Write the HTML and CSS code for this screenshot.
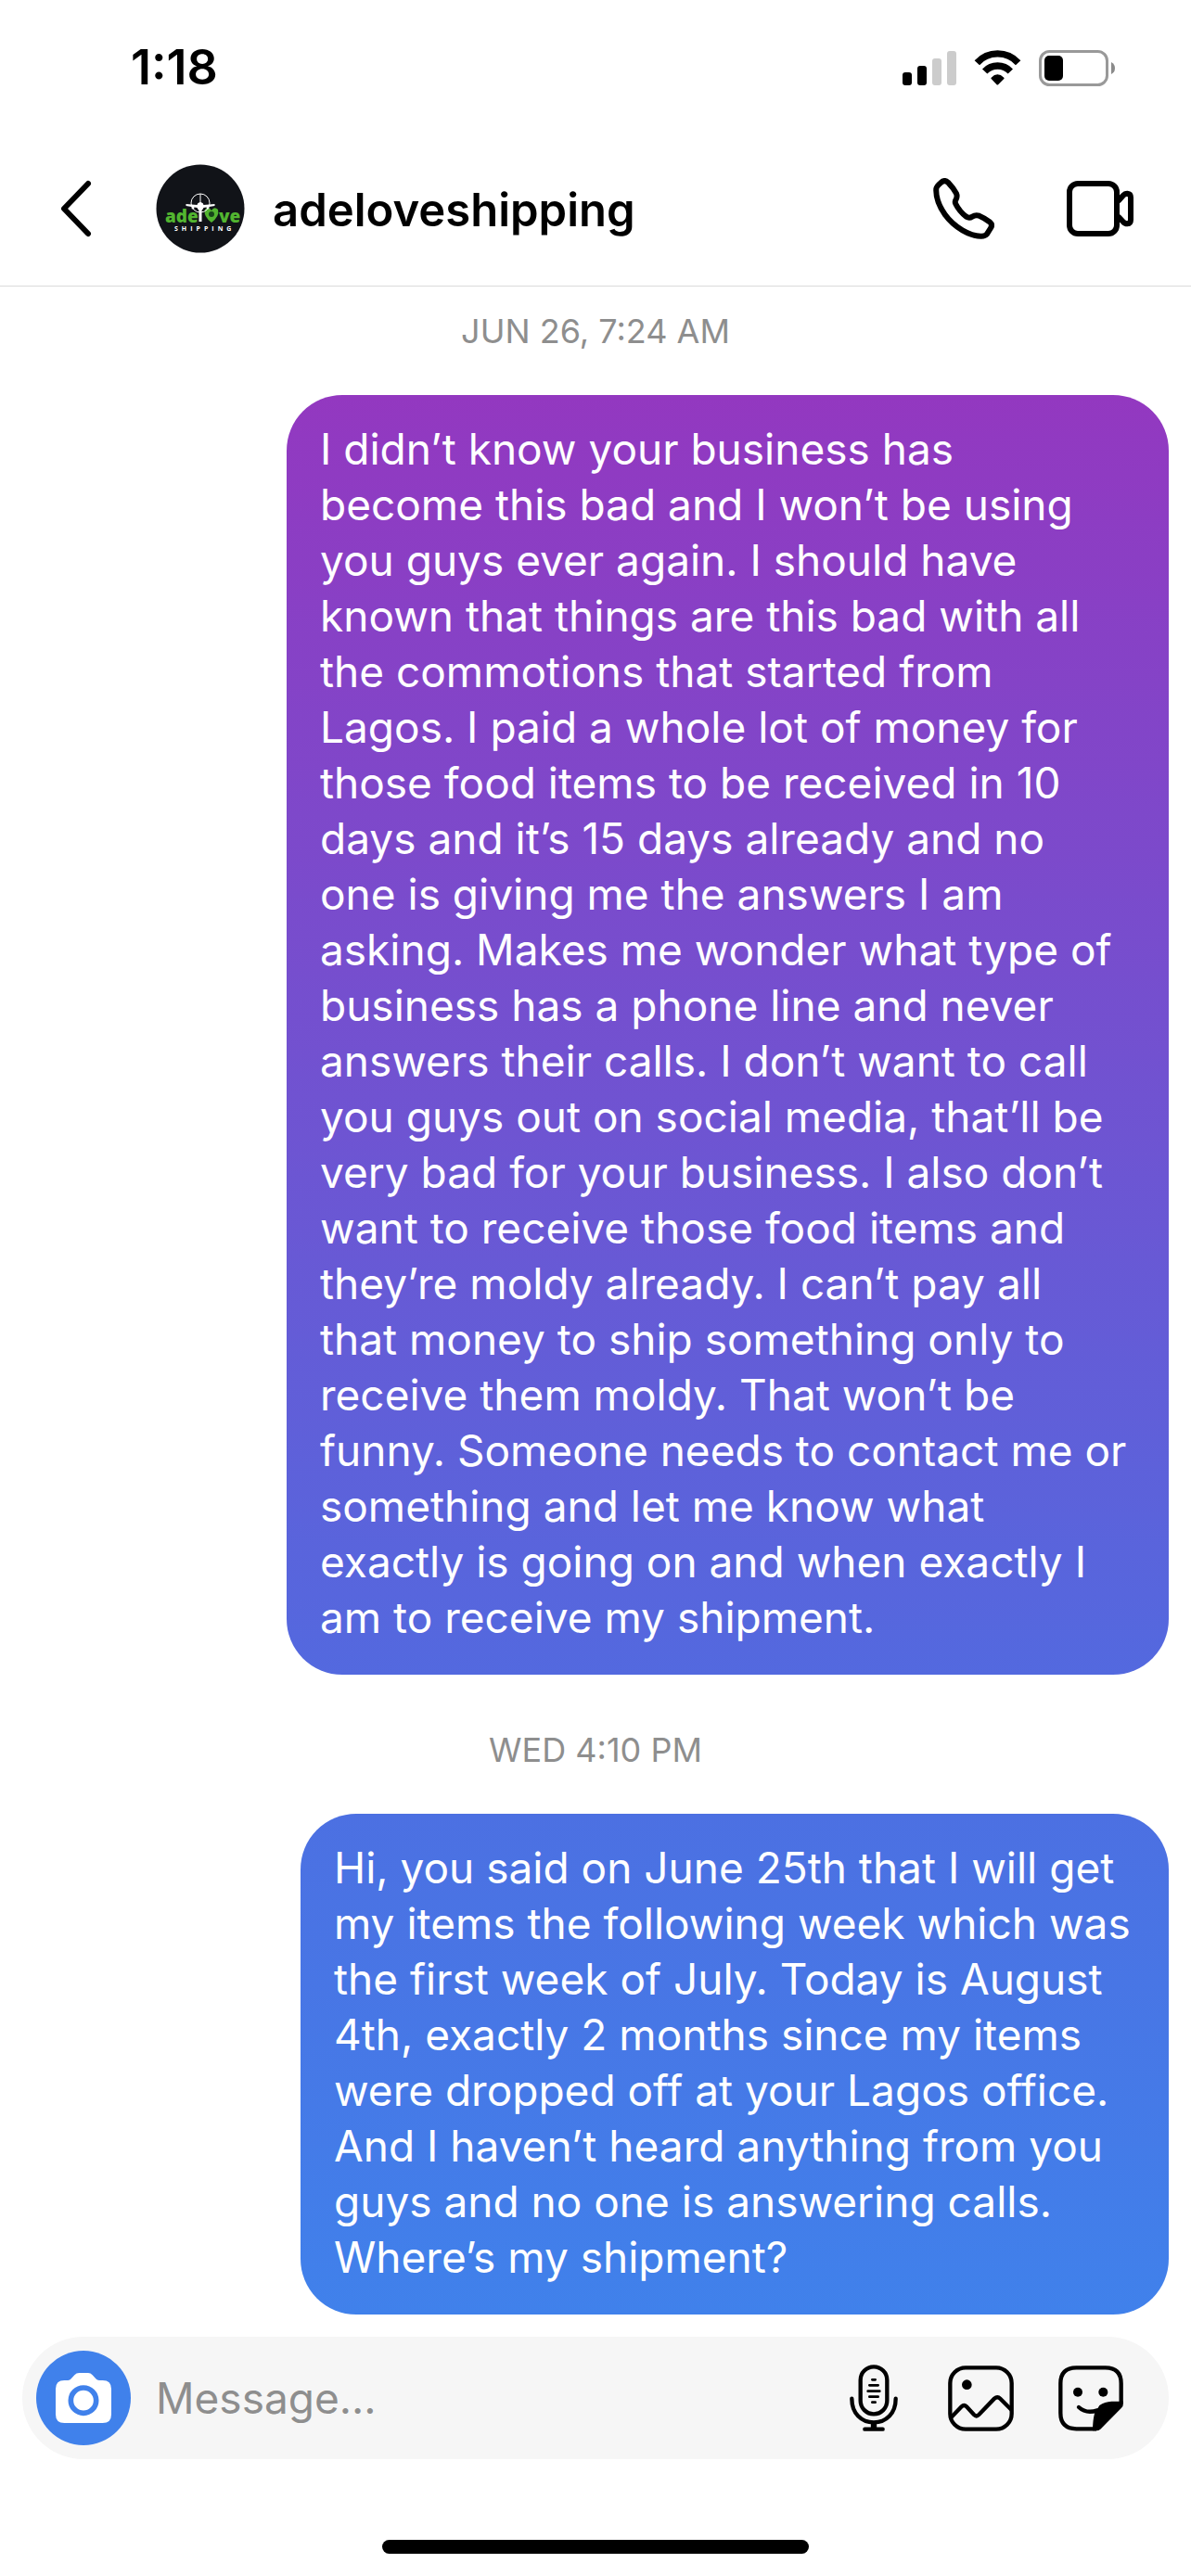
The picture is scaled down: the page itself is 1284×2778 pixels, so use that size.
FILE: index.html
```html
<!DOCTYPE html>
<html lang="en">
<head>
<meta charset="utf-8">
<meta name="viewport" content="width=device-width, initial-scale=1">
<title>adeloveshipping</title>
<link rel="stylesheet" href="styles.css">
</head>
<body>
<div class="status">
  <time class="clock">1:18</time>
  <div class="indicators">
    <svg width="58" height="37" viewBox="0 0 58 37" aria-hidden="true">
      <rect y="23" width="10" height="14" rx="3"/>
      <rect x="16" y="16" width="10" height="21" rx="3"/>
      <rect class="dim" x="32" y="8" width="10" height="29" rx="3"/>
      <rect class="dim" x="48" width="10" height="37" rx="3"/>
    </svg>
    <svg width="51" height="38" viewBox="0 0 153 114" aria-hidden="true">
      <path class="line" stroke-width="22" d="M10 41A90 90 0 0 1 143 41"/>
      <path class="line" stroke-width="22" d="M35 69A57 57 0 0 1 118 69"/>
      <path d="M56 89Q76 69 97 89Q99 91 97 93L79 111Q76 114 73 111L56 93Q54 91 56 89Z"/>
    </svg>
    <svg width="82" height="39" viewBox="0 0 82 39" aria-hidden="true">
      <rect class="shell" x="1.5" y="1.5" width="72" height="36" rx="10" stroke-width="3"/>
      <rect x="6" y="6" width="20" height="27" rx="5"/>
      <path class="nub" d="M78 13Q82 15 82 19.500T78 26Z"/>
    </svg>
  </div>
</div>

<header class="header">
  <button class="icon-button" type="button" aria-label="Back">
    <svg width="36" height="62" viewBox="0 0 36 62"><path class="line round" stroke-width="6" d="M32 4L6 31L32 58"/></svg>
  </button>
  <a class="profile" href="#profile">
    <svg class="avatar" width="96" height="96" viewBox="0 0 96 96" aria-hidden="true">
      <circle class="disc" cx="48" cy="48" r="47.500"/>
      <text class="brand" x="10" y="63">ade</text>
      <text class="brand" x="68" y="63">ve</text>
      <path class="leaf" d="M60 63Q51 56 53 49Q57 45 60 50Q63 45 67 49Q69 56 60 63Z"/>
      <circle class="core" cx="60" cy="54" r="3"/>
      <circle class="ring" cx="48" cy="42" r="10"/>
      <path class="plane" d="M47.500 32h1v9q3 1 3 3l12-1v2l-12 2q-1 2-2 3v12h-3v-12q-1-1-2-3l-12-2v-2l12 1q0-2 3-3Z"/>
      <circle class="plane" cx="40" cy="47" r="1.500"/>
      <circle class="plane" cx="56" cy="47" r="1.500"/>
      <text class="strap" x="20" y="72">SHIPPING</text>
    </svg>
    <h1 class="name">adeloveshipping</h1>
  </a>
  <div class="calls">
    <button class="icon-button" type="button" aria-label="Voice call">
      <svg width="66" height="66" viewBox="0 0 198 198"><path class="line round" stroke-width="18" d="M25 15Q37 4 48 14Q66 33 75 50Q79 60 74 69Q69 76 73 84Q85 108 107 125Q117 131 126 125Q137 118 149 122Q168 130 184 143Q193 151 186 162L174 181Q168 188 156 188C120 189 68 160 38 118C18 89 8 62 10 34Q11 27 25 15Z"/></svg>
    </button>
    <button class="icon-button" type="button" aria-label="Video call">
      <svg width="72" height="60" viewBox="0 0 216 180"><rect class="line" stroke-width="18" x="9" y="9" width="153" height="162" rx="27"/><path class="line" stroke-width="18" d="M166 66L182 48Q188 41 196 41Q207 42 207 54V126Q207 138 196 139Q188 139 182 132L166 115"/></svg>
    </button>
  </div>
</header>

<main class="thread">
  <time class="stamp">JUN 26, 7:24 AM</time>
  <p class="bubble bubble-first">I didn’t know your business has<br>
    become this bad and I won’t be using<br>
    you guys ever again. I should have<br>
    known that things are this bad with all<br>
    the commotions that started from<br>
    Lagos. I paid a whole lot of money for<br>
    those food items to be received in 10<br>
    days and it’s 15 days already and no<br>
    one is giving me the answers I am<br>
    asking. Makes me wonder what type of<br>
    business has a phone line and never<br>
    answers their calls. I don’t want to call<br>
    you guys out on social media, that’ll be<br>
    very bad for your business. I also don’t<br>
    want to receive those food items and<br>
    they’re moldy already. I can’t pay all<br>
    that money to ship something only to<br>
    receive them moldy. That won’t be<br>
    funny. Someone needs to contact me or<br>
    something and let me know what<br>
    exactly is going on and when exactly I<br>
    am to receive my shipment.</p>
  <time class="stamp stamp-next">WED 4:10 PM</time>
  <p class="bubble bubble-second">Hi, you said on June 25th that I will get<br>
    my items the following week which was<br>
    the first week of July. Today is August<br>
    4th, exactly 2 months since my items<br>
    were dropped off at your Lagos office.<br>
    And I haven’t heard anything from you<br>
    guys and no one is answering calls.<br>
    Where’s my shipment?</p>
</main>

<form class="composer">
  <button class="camera" type="button" aria-label="Camera">
    <svg width="60" height="54" viewBox="0 0 180 162"><path class="body" d="M28 24H40Q46 24 50 19L61 7Q67 0 76 0H105Q113 0 119 7L130 19Q134 24 141 24H152Q180 24 180 52V134Q180 162 152 162H28Q0 162 0 134V52Q0 24 28 24Z"/><circle class="lens" cx="90" cy="89" r="41" stroke-width="17"/></svg>
  </button>
  <input class="field" type="text" placeholder="Message..." aria-label="Message">
  <div class="tools">
    <button class="icon-button" type="button" aria-label="Voice message">
      <svg width="58" height="72" viewBox="0 0 174 216"><rect class="line" stroke-width="13" x="35" y="7" width="86" height="153" rx="43"/><path class="line round" stroke-width="13" d="M7 110C7 158 38 187 78 187S149 158 149 110M49 209H107"/><path class="line" stroke-width="19" d="M78 187V209"/><path class="line round" stroke-width="8" d="M73 49H83M64 67H92M59 86H97M64 104H92M73 122H83"/></svg>
    </button>
    <button class="icon-button" type="button" aria-label="Photo">
      <svg width="71" height="71" viewBox="0 0 213 213"><rect class="line" stroke-width="13" x="7" y="7" width="199" height="199" rx="50"/><circle cx="61" cy="62" r="16"/><path class="line" stroke-width="13" d="M8 170L44 133Q52 125 60 133L84 159Q92 167 100 159L150 107Q160 98 169 107L205 143"/></svg>
    </button>
    <button class="icon-button" type="button" aria-label="Sticker">
      <svg width="70" height="71" viewBox="0 0 210 213"><path class="line" stroke-width="13" d="M123 205H58Q7 205 7 154V58Q7 7 58 7H152Q203 7 203 58V122"/><path d="M111 211H123Q130 211 136 206L204 137Q210 131 210 122V116H172Q150 117 133 129L117 155Q111 178 111 211Z"/><path class="line round" stroke-width="13" d="M66 135Q90 157 126 145"/><circle cx="63" cy="86" r="15"/><circle cx="145" cy="86" r="15"/></svg>
    </button>
  </div>
</form>
<div class="home-bar"></div>
</body>
</html>
```
FILE: styles.css
```css
* {
  box-sizing: border-box;
}

body {
  margin: 0;
  background: #fff;
  color: #000;
  font-family: Inter, "Liberation Sans", sans-serif;
}

button {
  margin: 0;
  padding: 0;
  border: 0;
  background: none;
  cursor: pointer;
}

svg {
  display: block;
}

.line {
  fill: none;
  stroke: #000;
}

.round {
  stroke-linecap: round;
  stroke-linejoin: round;
}

/* Status bar */
.status {
  display: flex;
  align-items: center;
  justify-content: space-between;
  height: 146px;
  padding: 0 82px 0 141px;
}

.clock {
  font-size: 52px;
  font-weight: 600;
  line-height: 60px;
}

.indicators {
  display: flex;
  align-items: center;
  gap: 19px;
}

.dim {
  fill: #ccc;
}

.shell {
  fill: none;
  stroke: #999;
}

.nub {
  fill: #8a8a8a;
}

/* Conversation header */
.header {
  display: flex;
  align-items: center;
  padding: 31px 62px 35px 63px;
  border-bottom: 1px solid #dbdbdb;
}

.profile {
  display: flex;
  flex: 1;
  align-items: center;
  gap: 30px;
  margin-left: 69px;
  color: inherit;
  text-decoration: none;
}

.name {
  margin: 0;
  padding-top: 4px;
  font-size: 49px;
  font-weight: 600;
  line-height: 60px;
}

.calls {
  display: flex;
  align-items: center;
  gap: 78px;
}

.disc {
  fill: #111318;
}

.brand {
  fill: #52b530;
  font-size: 19px;
  font-weight: 800;
  font-family: "Open Sans", sans-serif;
}

.leaf {
  fill: #52b530;
}

.core {
  fill: #17451a;
}

.ring {
  fill: none;
  stroke: #fff;
}

.plane {
  fill: #fff;
}

.strap {
  fill: #fff;
  font-size: 7px;
  font-weight: 700;
  font-family: "Open Sans", sans-serif;
  letter-spacing: 4px;
}

/* Messages */
.thread {
  display: flex;
  flex-direction: column;
  align-items: flex-end;
  padding: 24px;
}

.stamp {
  align-self: center;
  margin-bottom: 45px;
  color: #8e8e8e;
  font-size: 36px;
  line-height: 48px;
}

.stamp-next {
  margin-top: 57px;
}

.bubble {
  width: 100%;
  margin: 0;
  padding: 28px 36px 32px;
  border-radius: 60px;
  color: #fff;
  font-size: 46px;
  line-height: 60px;
}

.bubble-first {
  max-width: 951px;
  background: linear-gradient(#9338c0, #5369df);
}

.bubble-second {
  max-width: 936px;
  background: linear-gradient(#4c70e2, #4081eb);
}

/* Composer */
.composer {
  display: flex;
  align-items: center;
  margin: 0 24px;
  padding: 15px 49px 15px 15px;
  border-radius: 66px;
  background: #f6f6f6;
}

.camera {
  display: grid;
  flex: none;
  place-items: center;
  width: 102px;
  height: 102px;
  border-radius: 50%;
  background: #4081eb;
}

.body {
  fill: #fff;
}

.lens {
  fill: none;
  stroke: #4081eb;
}

.field {
  flex: 1;
  min-width: 0;
  margin-left: 27px;
  padding: 0;
  border: 0;
  outline: 0;
  background: none;
  font-family: inherit;
  font-size: 46px;
  line-height: 60px;
}

.field::placeholder {
  color: #8e8e8e;
  opacity: 1;
}

.tools {
  display: flex;
  align-items: center;
  gap: 48px;
}

.home-bar {
  width: 460px;
  height: 15px;
  margin: 87px auto 24px;
  border-radius: 8px;
  background: #000;
}
```
